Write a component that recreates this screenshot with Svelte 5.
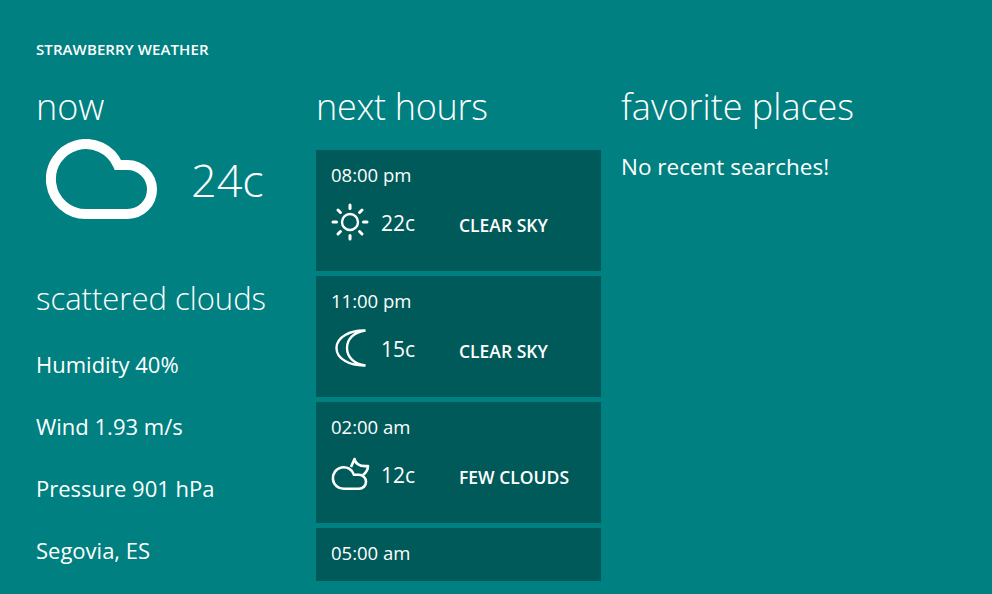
<script>
  const stats = ["Humidity 40%", "Wind 1.93 m/s", "Pressure 901 hPa", "Segovia, ES"];
  const hours = [
    { time: "08:00 pm", temp: "22c", desc: "CLEAR SKY", icon: "sun" },
    { time: "11:00 pm", temp: "15c", desc: "CLEAR SKY", icon: "moon" },
    { time: "02:00 am", temp: "12c", desc: "FEW CLOUDS", icon: "cloudmoon" }
  ];
  const rays = [0, 45, 90, 135, 180, 225, 270, 315];
</script>

<div class="page">
  <h1>STRAWBERRY WEATHER</h1>
  <div class="columns">
    <section class="now">
      <h2>now</h2>
      <div class="current">
        <svg class="cloud" viewBox="0 0 111 80" width="111" height="80" fill="none" stroke="#fff" stroke-width="10" stroke-linejoin="miter">
          <path d="M40 75H81.5A24.5 24.5 0 0 0 81.5 26H72A35 35 0 1 0 40 75Z" />
        </svg>
        <span class="temp">24c</span>
      </div>
      <h3>scattered clouds</h3>
      {#each stats as s}
        <p class="stat">{s}</p>
      {/each}
    </section>

    <section class="next">
      <h2>next hours</h2>
      <div class="cards">
        {#each hours as h}
          <div class="card">
            <div class="time">{h.time}</div>
            <div class="row">
              <span class="icon">
                {#if h.icon === "sun"}
                  <svg viewBox="0 0 40 40" width="40" height="40" fill="none" stroke="#fff" stroke-width="2.4">
                    <circle cx="20" cy="20" r="8" />
                    {#each rays as r}
                      <line x1="20" y1="6.5" x2="20" y2="3" stroke-width="3" stroke-linecap="round" transform="rotate({r} 20 20)" />
                    {/each}
                  </svg>
                {:else if h.icon === "moon"}
                  <svg viewBox="0 0 40 40" width="40" height="40" fill="none" stroke="#fff" stroke-width="2.4" stroke-linejoin="miter">
                    <path d="M35.5 2.5C24 4 17 11 17 20S24 36 35.5 37.5C20 38 6.5 31 6.5 20S20 2 35.5 2.5Z" />
                  </svg>
                {:else}
                  <svg viewBox="0 0 40 40" width="40" height="40" fill="none" stroke="#fff" stroke-width="2.6" stroke-linejoin="round">
                    <path d="M14 34.8H29A7 7 0 0 0 29 20.8H24A10.8 10.8 0 1 0 14 34.8Z" />
                    <path d="M21 13L24.5 5Q26 13 38 12Q38 17 33 21" />
                  </svg>
                {/if}
              </span>
              <span class="small-temp">{h.temp}</span>
              <span class="desc">{h.desc}</span>
            </div>
          </div>
        {/each}
        <div class="card last">
          <div class="time">05:00 am</div>
        </div>
      </div>
    </section>

    <section class="places">
      <h2>favorite places</h2>
      <p class="empty">No recent searches!</p>
    </section>
  </div>
</div>

<style>
  :global(body) {
    margin: 0;
    background: #008080;
  }

  .page {
    height: 594px;
    box-sizing: border-box;
    padding: 40px 0 0 36px;
    background: #008080;
    color: #fff;
    font-family: "Open Sans", "Noto Sans", sans-serif;
    overflow: hidden;
  }

  h1 {
    margin: 0;
    font-size: 15px;
    line-height: 18px;
    font-weight: 600;
    letter-spacing: 0.1px;
  }

  .columns {
    display: flex;
    margin-top: 26px;
  }

  h2 {
    margin: 0;
    font-size: 36px;
    line-height: 45px;
    font-weight: 300;
  }

  .next h2 {
    letter-spacing: -0.3px;
  }

  .now {
    width: 280px;
  }

  .current {
    display: flex;
    align-items: center;
    padding-left: 10px;
    margin-top: 4px;
    height: 92px;
  }

  .temp {
    font-size: 45px;
    font-weight: 300;
    margin-left: 34px;
  }

  h3 {
    margin: 52px 0 0;
    font-size: 31px;
    line-height: 42px;
    font-weight: 300;
  }

  .stat {
    margin: 0;
    font-size: 22px;
    line-height: 30px;
    padding-top: 32px;
    font-weight: 400;
  }

  h3 + .stat {
    padding-top: 30px;
  }

  .next {
    width: 305px;
  }

  .cards {
    display: flex;
    flex-direction: column;
    gap: 5px;
    margin-top: 21px;
  }

  .card {
    width: 285px;
    height: 121px;
    box-sizing: border-box;
    padding: 13px 15px 0;
    background: #005a5a;
  }

  .card.last {
    height: 53px;
  }

  .time {
    font-size: 18.5px;
    line-height: 24px;
    font-weight: 400;
  }

  .row {
    display: flex;
    align-items: center;
    margin-top: 15px;
    height: 40px;
  }

  .icon {
    width: 40px;
    height: 40px;
    margin-left: -1px;
  }

  .small-temp {
    font-size: 21px;
    font-weight: 400;
    width: 78px;
    margin-left: 11px;
    margin-top: 2px;
  }

  .desc {
    font-size: 17.5px;
    font-weight: 600;
    margin-top: 6px;
  }

  .empty {
    margin: 23px 0 0;
    font-size: 22.5px;
    line-height: 30px;
    font-weight: 400;
  }
</style>
